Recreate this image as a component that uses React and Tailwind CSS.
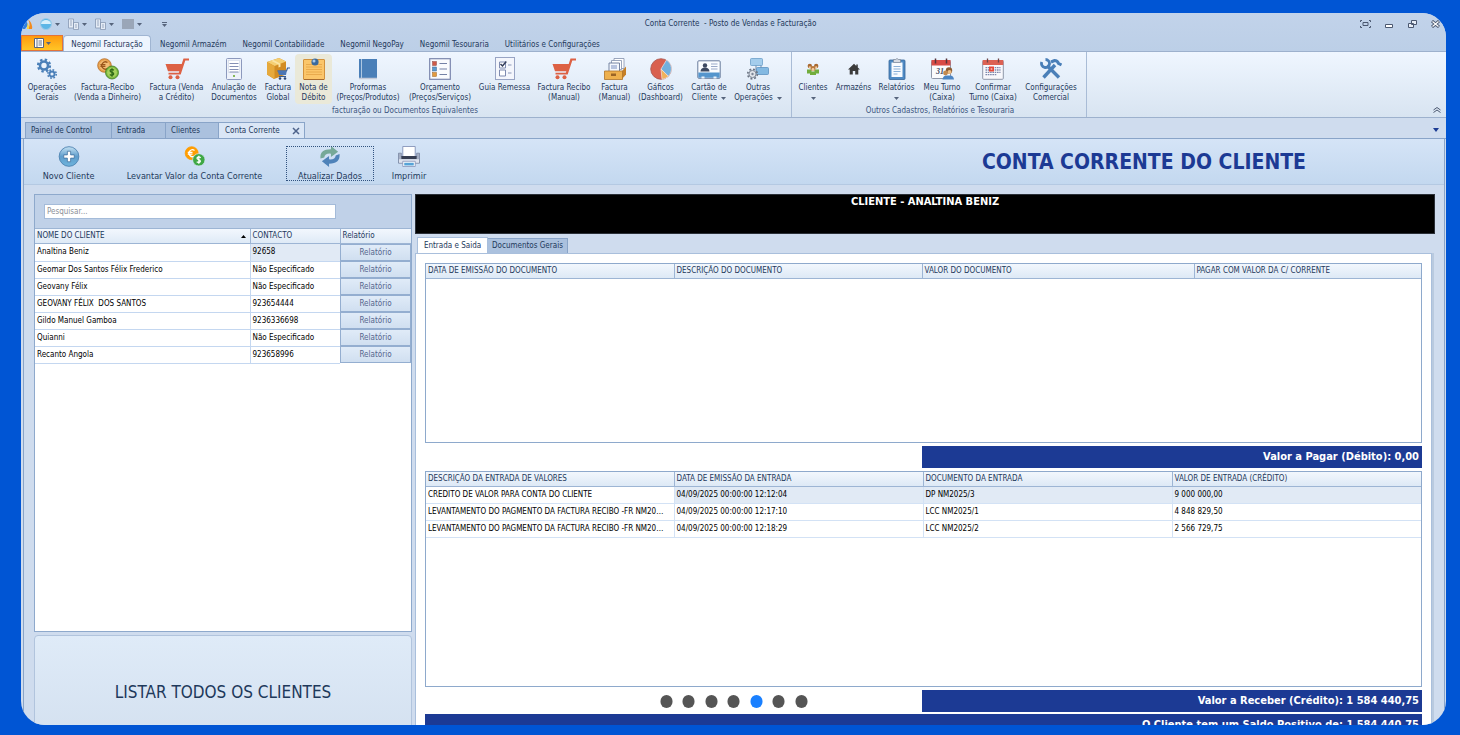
import * as React from 'react';

const OperationsIcon = () => (
	<svg viewBox="0 0 22 22" className="size-[22px]" fill="none" stroke="#4a7fb8">
		<circle cx="8" cy="7.5" r="4" strokeWidth="2.6" />
		<circle cx="8" cy="7.5" r="6" strokeWidth="2.2" strokeDasharray="2.4 2.31" />
		<circle cx="16" cy="16" r="2.5" strokeWidth="1.8" />
		<circle cx="16" cy="16" r="4.2" strokeWidth="1.6" strokeDasharray="1.7 1.6" />
	</svg>
);

const CoinsIcon = ({ flat }) => (
	<svg viewBox="0 0 22 22" className="size-[22px]">
		<circle cx="7.5" cy="7.5" r="6.8" fill={flat ? '#ff9d00' : '#e7a04c'} stroke={flat ? '#ff9d00' : '#b86c24'} strokeWidth=".8" />
		{!flat && <circle cx="7.5" cy="7.5" r="5" fill="#f3bd76" />}
		<path d="M10.5 4.6A3.6 3.6 0 1 0 10.5 10.4M3.4 6.6h5M3.4 8.4h5" fill="none" stroke={flat ? '#fff' : '#9a561a'} strokeWidth="1.3" />
		<circle cx="15" cy="14.5" r="6.5" fill={flat ? '#3fa845' : '#77b63d'} stroke={flat ? '#d3e3f6' : '#3f7a1f'} strokeWidth=".8" />
		{!flat && <circle cx="15" cy="14.5" r="4.9" fill="#a5d15c" />}
		<path d="M17 12.2q-2-1.3-3.3-.4-1.2 1.2.3 2.1l2 .9q1.3 1-.1 2.2-1.5.8-3.1-.4M15 10.3v8.4" fill="none" stroke={flat ? '#fff' : '#2f6a17'} strokeWidth="1.3" />
	</svg>
);

const CartIcon = () => (
	<svg viewBox="0 0 24 22" className="h-[22px] w-6" fill="#dd6144">
		<path d="M.5 6h16.2L18.500.6H24v1.800h-3.700l-4.600 14H3.500v-1.600h10.300l.5-1.600H3z" />
		<circle cx="5.500" cy="19.300" r="2" />
		<circle cx="12.500" cy="19.300" r="2" />
	</svg>
);

const DocumentIcon = () => (
	<svg viewBox="0 0 22 22" className="size-[22px]">
		<rect x="3.5" y=".5" width="15" height="21" rx="1" fill="#eef2fa" stroke="#8c99bd" />
		<rect x="5.5" y="2.5" width="11" height="12" fill="#fff" stroke="#cdd5e6" strokeWidth=".6" />
		<path d="M6.5 5.5h9M6.5 8.5h9M6.5 11.5h9M6.5 14h9" stroke="#8590b5" />
		<circle cx="11" cy="18" r="1.1" fill="#6caa34" />
	</svg>
);

const BoxIcon = () => (
	<svg viewBox="0 0 24 22" className="h-[22px] w-6">
		<path d="m1 4 12-4 7 3.5v13L8 21l-7-4.500z" fill="#d28c23" />
		<path d="M1 4 13 0l7 3.500L8.500 8z" fill="#f5cf73" />
		<path d="M1 4l7.500 4v13L1 16.500z" fill="#e6a93c" />
		<path d="m5 2.700 7.500 3.800v3l2-.8v-3L7.500 2z" fill="#fbe5a5" />
		<path d="M11.500 13h9l1-3H24" fill="none" stroke="#365a91" strokeWidth="1.200" />
		<path d="M11.500 12.500h9.300L20 17h-7z" fill="#4c76b4" />
		<path d="M13 18.500h7" stroke="#365a91" />
		<circle cx="14" cy="20.500" r="1.300" fill="#2c4675" />
		<circle cx="19" cy="20.500" r="1.300" fill="#2c4675" />
	</svg>
);

const NoteIcon = () => (
	<svg viewBox="0 0 22 22" className="size-[22px]">
		<rect x=".5" y="1.500" width="21" height="20" rx=".5" fill="#fbc66a" stroke="#d3923c" />
		<path d="M3 6.500h16M3 9h16M3 11.500h16M3 14h16M3 16.500h16" stroke="#e4a345" strokeWidth=".8" />
		<path d="M1 21.500h20" stroke="#a76b2e" />
		<circle cx="12" cy="4" r="3.600" fill="#3b6a9d" />
		<circle cx="11" cy="3" r="1.500" fill="#a5c8ea" />
	</svg>
);

const BookIcon = () => (
	<svg viewBox="0 0 22 22" className="size-[22px]">
		<path d="M2 1h18v19H2z" fill="#4a7fb8" />
		<path d="M4.500 1v19" stroke="#c9daec" strokeWidth=".8" />
		<path d="M2 20.500h18" stroke="#c3c9d8" strokeWidth="1.500" />
	</svg>
);

const OrderListIcon = () => (
	<svg viewBox="0 0 22 22" className="size-[22px]">
		<rect x=".7" y=".7" width="20.600" height="20.600" fill="#fafbfe" stroke="#7a86ad" strokeWidth="1.200" />
		<rect x="3.500" y="3.500" width="4" height="4" fill="#cf5a48" stroke="#8f4b45" strokeWidth=".5" />
		<rect x="3.500" y="9" width="4" height="4" fill="#5a9bd0" stroke="#41648c" strokeWidth=".5" />
		<rect x="3.500" y="14.500" width="4" height="4" fill="#e39a3d" stroke="#9c6429" strokeWidth=".5" />
		<path d="M10.500 5.500h7.500M10.500 11h7.500M10.500 16.500h7.500" stroke="#7481a6" />
	</svg>
);

const ChecklistIcon = () => (
	<svg viewBox="0 0 22 24" className="h-6 w-[22px]" fill="none">
		<rect x="1.500" y=".5" width="19" height="22" fill="#f4f6fc" stroke="#98a4c4" />
		<path d="M5.500 5h6v6h-6zM5.500 13h6v6h-6z" fill="#fff" stroke="#7e8bb0" />
		<path d="m6.500 7 2 2 3.800-4.500" stroke="#333c59" strokeWidth="1.500" />
		<path d="M14 8h3.500M14 16h3.500" stroke="#8b97b8" />
	</svg>
);

const TrayIcon = () => (
	<svg viewBox="0 0 22 22" className="size-[22px]">
		<path d="M10 .5h10v10H10z" fill="#fff" stroke="#8390ac" strokeWidth=".8" />
		<path d="M7.500 2.500h10v9h-10z" fill="#fff" stroke="#8390ac" strokeWidth=".8" />
		<path d="M5 5h10.500v9H5z" fill="#f5f8fd" stroke="#6a7898" strokeWidth=".9" />
		<path d="M7 8h6M7 10h6" stroke="#7a8fc0" />
		<path d="m18 13 4-4.500v8L18 21z" fill="#c57f26" />
		<path d="M.5 13h18v8.500H.5z" fill="#eeb04d" stroke="#ae7429" strokeWidth=".8" />
		<path d="M7 15.500h5V18H7z" fill="#9a6426" />
	</svg>
);

const PieIcon = () => (
	<svg viewBox="0 0 22 22" className="size-[22px]">
		<circle cx="11" cy="11" r="10.300" fill="#d9604f" stroke="#a9564f" strokeWidth=".8" />
		<path d="M11 11 16.500 2a10.300 10.300 0 0 1 1.800 16.200z" fill="#72b0dd" stroke="#f2e4e2" strokeWidth=".7" />
		<path d="m11 11 7.300 7.200A10.300 10.300 0 0 1 12 21.300z" fill="#efb25c" stroke="#f2e4e2" strokeWidth=".7" />
	</svg>
);

const CardIcon = () => (
	<svg viewBox="0 0 24 22" className="h-[22px] w-6">
		<rect x=".8" y="2.800" width="22.400" height="17.500" rx="1" fill="#fafcff" stroke="#687b9c" />
		<path d="M1.300 14.500h21.400v5.300H1.300z" fill="#5495cd" />
		<path d="M4.500 20.500h3v-2h-3zM16.500 20.500h3v-2h-3z" fill="#eaf2fa" />
		<circle cx="8" cy="7.500" r="2.200" fill="#3d4961" />
		<path d="M3.500 13.500q.3-3.300 3-3.800h3q2.700.5 3 3.800z" fill="#3d4961" />
		<path d="M14 6h6.500M14 8.500h6.500M14 11h6.500" stroke="#9aa9c8" />
	</svg>
);

const OtherIcon = () => (
	<svg viewBox="0 0 22 22" className="size-[22px]">
		<path d="M9 7v6M14 7v3" stroke="#7389a4" />
		<rect x="3.500" y=".5" width="12" height="7" rx="1" fill="#a4cdec" stroke="#6c9fc9" strokeWidth=".8" />
		<rect x="9.500" y="9.500" width="12" height="7" rx="1" fill="#83b9e2" stroke="#5d92c0" strokeWidth=".8" />
		<circle cx="5.500" cy="16" r="4.800" fill="none" stroke="#6b7482" strokeWidth="1.700" strokeDasharray="1.900 1.870" />
		<circle cx="5.500" cy="16" r="3.600" fill="#dfe3e9" stroke="#7a8494" />
		<circle cx="5.500" cy="16" r="1.200" fill="#7a8494" />
	</svg>
);

const PeopleIcon = () => (
	<svg viewBox="0 0 12 12" className="size-3">
		<path d="M0 6.500h4.500v4H0zM7.500 6.500H12v4H7.500zM3 8.500h6V12H3z" fill="#72ad3c" />
		<circle cx="2.800" cy="3" r="2.200" fill="#a96a32" />
		<circle cx="9.200" cy="3" r="2.200" fill="#a96a32" />
		<circle cx="6" cy="5.500" r="2.500" fill="#b9793d" />
		<circle cx="6" cy="6.500" r="1.400" fill="#f2cda0" />
		<circle cx="2.800" cy="4.300" r="1.100" fill="#f2cda0" />
		<circle cx="9.200" cy="4.300" r="1.100" fill="#f2cda0" />
	</svg>
);

const HouseIcon = () => (
	<svg viewBox="0 0 12 12" className="size-3" fill="#3b3b3b">
		<path d="M6 .8 0 6.500h1.700V11.500h3.100V8h2.400v3.500h3.100V6.500H12L9.800 4.400V1.500H8.300V3z" />
	</svg>
);

const ClipboardIcon = () => (
	<svg viewBox="0 0 22 22" className="size-[22px]">
		<rect x="3" y="2" width="16" height="19.500" rx="1" fill="#4f8ac4" stroke="#366699" strokeWidth=".8" />
		<path d="M5.500 4.500h11v14.500h-11z" fill="#f8fbff" />
		<path d="M7.500 1.500h2q1.500-2 3 0h2v3h-7z" fill="#d5dae3" stroke="#7d8797" strokeWidth=".7" />
		<path d="M7.500 8.500h7M7.500 11h7M7.500 13.500h7M7.500 16h4" stroke="#8ab0d8" />
	</svg>
);

const CalendarUserIcon = () => (
	<svg viewBox="0 0 24 22" className="h-[22px] w-6">
		<rect x="1.500" y="2.500" width="19" height="18" rx="1" fill="#fbfbfd" stroke="#8e96a8" />
		<path d="M1.500 2h19v5.500h-19z" fill="#d94b46" />
		<path d="M5.500.5v5M16.500.5v5" stroke="#56333a" strokeWidth="1.500" />
		<text x="6" y="16" fontSize="8" fontStyle="italic" fontWeight="700" fontFamily="Liberation Serif, serif" fill="#414960">31</text>
		<circle cx="19" cy="12.500" r="3.200" fill="#8d5c32" />
		<circle cx="19.500" cy="14" r="2" fill="#edbd85" />
		<circle cx="15.500" cy="15" r="2.400" fill="#c48a50" />
		<path d="M12.500 21.500q.5-4 4-4h3.500q3.500 0 4 4z" fill="#4a84c4" />
	</svg>
);

const CalendarIcon = () => (
	<svg viewBox="0 0 22 22" className="size-[22px]">
		<rect x=".7" y="2.500" width="20.600" height="18.800" rx="1" fill="#f8f8fc" stroke="#8e96a8" />
		<path d="M.7 2h20.600v5H.7z" fill="#dc6153" />
		<path d="M5.500.5v4M16.500.5v4" stroke="#6e4548" strokeWidth="1.300" />
		<path d="M3.500 9.700h15M3.500 12h15M3.500 14.300h15M3.500 16.600h11" stroke="#7d87ab" strokeWidth="1.300" strokeDasharray="1.600 .7" />
		<rect x="7" y="8.500" width="5" height="5" fill="#e6483a" />
		<path d="M8.700 11h1.600" stroke="#fff" />
	</svg>
);

const ToolsIcon = () => (
	<svg viewBox="0 0 22 22" className="size-[22px]" fill="none" stroke="#4a7fb8">
		<path d="M3.500 19.500 15 7" strokeWidth="3.400" />
		<path d="m7 7.500 12 12" strokeWidth="3.400" />
		<path d="M1.800 4a4 4 0 1 0 3.700-2.500" strokeWidth="2.800" />
		<path d="m11 4 3.500-1.500q3 0 4 3l3 1.500" strokeWidth="3" />
	</svg>
);

const AddIcon = () => (
	<svg viewBox="0 0 22 22" className="size-[22px]">
		<defs>
			<linearGradient id="add" x1="0" y1="0" x2="0" y2="1">
				<stop offset="0" stopColor="#c5e2f3" />
				<stop offset=".5" stopColor="#5f9dcc" />
				<stop offset="1" stopColor="#6fb4dc" />
			</linearGradient>
		</defs>
		<circle cx="11" cy="11" r="10.300" fill="url(#add)" stroke="#4a80ae" strokeWidth=".9" />
		<path d="M9.300 5.500h3.400v3.800h3.800v3.400h-3.800v3.800H9.300v-3.800H5.500V9.300h3.800z" fill="#fff" stroke="#3f6f9c" strokeWidth=".8" />
	</svg>
);

const RefreshIcon = () => (
	<svg viewBox="0 0 22 22" className="size-[22px]">
		<path d="M1 13Q0 3.500 12 3.500V0l7.500 6L12 11.500V8Q5.500 7.500 5 12z" fill="#76a998" />
		<path d="M21 8.500q1 10-11 10V22l-7.500-6L10 10.500V14q6.500.5 7-4z" fill="#4f83b9" />
	</svg>
);

const PrinterIcon = () => (
	<svg viewBox="0 0 24 22" className="h-[22px] w-6">
		<path d="M5.500.5h13v11h-13z" fill="#fff" stroke="#7e8db4" strokeWidth=".9" />
		<path d="M1 7.500h3v4h16v-4h3V18H1z" fill="#a5afc4" stroke="#6e7b97" strokeWidth=".7" />
		<path d="M4 10.500h16v3H4z" fill="#363e52" />
		<path d="M1.500 14h21v3.500h-21z" fill="#dfe4ef" />
		<path d="M5.500 16h13v5.500h-13z" fill="#fff" stroke="#7e8db4" strokeWidth=".8" />
		<path d="M7 17.500h10v3H7z" fill="#56a3d7" />
	</svg>
);

const Caret = () => (
	<svg viewBox="0 0 5 3" className="inline-block h-[3px] w-[5px]" fill="#56647c">
		<path d="M0 0h5L2.500 3z" />
	</svg>
);

const DOCUMENTS = [
	{ lines: ['Operações', 'Gerais'], icon: OperationsIcon, width: 'w-[44px]' },
	{ lines: ['Factura-Recibo', '(Venda a Dinheiro)'], icon: CoinsIcon, width: 'w-[77px]' },
	{ lines: ['Factura (Venda', 'a Crédito)'], icon: CartIcon, width: 'w-[61px]' },
	{ lines: ['Anulação de', 'Documentos'], icon: DocumentIcon, width: 'w-[54px]' },
	{ lines: ['Factura', 'Global'], icon: BoxIcon, width: 'w-[34px]' },
	{ lines: ['Nota de', 'Débito'], icon: NoteIcon, width: 'w-[37px]', active: true },
	{ lines: ['Proformas', '(Preços/Produtos)'], icon: BookIcon, width: 'w-[72px]' },
	{ lines: ['Orçamento', '(Preços/Serviços)'], icon: OrderListIcon, width: 'w-[72px]' },
	{ lines: ['Guia Remessa', ''], icon: ChecklistIcon, width: 'w-[57px]' },
	{ lines: ['Factura Recibo', '(Manual)'], icon: CartIcon, width: 'w-[62px]' },
	{ lines: ['Factura', '(Manual)'], icon: TrayIcon, width: 'w-[39px]' },
	{ lines: ['Gáficos', '(Dashboard)'], icon: PieIcon, width: 'w-[53px]' },
	{ lines: ['Cartão de', 'Cliente'], icon: CardIcon, width: 'w-[44px]', caret: true },
	{ lines: ['Outras', 'Operações'], icon: OtherIcon, width: 'w-[54px]', caret: true },
];

const OTHERS = [
	{ lines: ['Clientes', ''], icon: PeopleIcon, width: 'w-[34px]', caret: true },
	{ lines: ['Armazéns', ''], icon: HouseIcon, width: 'w-[47px]' },
	{ lines: ['Relatórios', ''], icon: ClipboardIcon, width: 'w-[39px]', caret: true },
	{ lines: ['Meu Turno', '(Caixa)'], icon: CalendarUserIcon, width: 'w-[52px]' },
	{ lines: ['Confirmar', 'Turno (Caixa)'], icon: CalendarIcon, width: 'w-[50px]' },
	{ lines: ['Configurações', 'Comercial'], icon: ToolsIcon, width: 'w-[66px]' },
];

const MODULES = ['Negomil Armazém', 'Negomil Contabilidade', 'Negomil NegoPay', 'Negomil Tesouraria', 'Utilitários e Configurações'];

const CLIENTS = [
	['Analtina Beniz', '92658'],
	['Geomar Dos Santos Félix Frederico', 'Não Especificado'],
	['Geovany Félix', 'Não Especificado'],
	['GEOVANY FÉLIX  DOS SANTOS', '923654444'],
	['Gildo Manuel Gamboa', '9236336698'],
	['Quianni', 'Não Especificado'],
	['Recanto Angola', '923658996'],
];

const ENTRIES = [
	['CREDITO DE VALOR PARA CONTA DO CLIENTE', '04/09/2025 00:00:00 12:12:04', 'DP NM2025/3', '9 000 000,00'],
	['LEVANTAMENTO DO PAGMENTO DA FACTURA RECIBO -FR NM2025/1', '04/09/2025 00:00:00 12:17:10', 'LCC NM2025/1', '4 848 829,50'],
	['LEVANTAMENTO DO PAGMENTO DA FACTURA RECIBO -FR NM2025/2', '04/09/2025 00:00:00 12:18:29', 'LCC NM2025/2', '2 566 729,75'],
];

const RibbonButton = ({ lines, icon: Icon, width, active, caret }) => (
	<button
		type="button"
		className={`${width} flex h-[50px] flex-col items-center justify-start whitespace-nowrap leading-[10px] ${active ? 'rounded-sm bg-[#eae9d9]' : ''}`}
	>
		<span className="flex h-[29px] shrink-0 items-center justify-center"><Icon /></span>
		<span className="h-[10px] shrink-0">{lines[0]}</span>
		<span className="flex h-[10px] shrink-0 items-center gap-1">{lines[1]}{caret && <Caret />}</span>
	</button>
);

const RibbonGroup = ({ title, items, className }) => (
	<div className={`flex shrink-0 flex-col items-center border-r border-[#a9bcd6] pl-1 pt-0.5 ${className}`}>
		<div className="flex">
			{items.map(item => <RibbonButton key={item.lines.join(' ')} {...item} />)}
		</div>
		<div className="mt-0.5 leading-[10px] text-[#3b5580]">{title}</div>
	</div>
);

const TitleBar = () => (
	<div className="flex h-[22px] items-center justify-between">
		<div className="flex flex-1 items-center gap-2">
			<svg viewBox="0 0 12 12" className="-mr-px size-3">
				<path d="M0 11 5 2l2 5-3 4z" fill="#2f7fe0" />
				<path d="M7 1q5 5 4 10H7q3-4 0-10z" fill="#f28a1d" />
				<path d="M6.500 5q2 3 1.500 6H6z" fill="#ffd633" />
			</svg>
			<button type="button" aria-label="Vista" className="flex items-center gap-[3px]">
				<svg viewBox="0 0 12 12" className="size-3">
					<circle cx="6" cy="6" r="5.500" fill="#5cb6e6" stroke="#9ccbe8" />
					<path d="M1 6a5 4 0 0 1 10 0z" fill="#d6effb" />
				</svg>
				<Caret />
			</button>
			{['Documento', 'Relatório'].map(name => (
				<button key={name} type="button" aria-label={name} className="flex items-center gap-[3px]">
					<svg viewBox="0 0 11 12" className="h-3 w-[11px]" fill="#e4ebf5" stroke="#8798b3" strokeWidth=".8">
						<path d="M.5 1h5v9h-5zM2 3h2M2 5h2M2 7h2M5.500 4.500h5v7h-5zM7 7h2M7 9h2" />
					</svg>
					<Caret />
				</button>
			))}
			<button type="button" aria-label="Cor" className="flex items-center gap-[3px]">
				<span className="h-2.5 w-3 bg-[#9aa6b8]" />
				<Caret />
			</button>
			<button type="button" aria-label="Personalizar" className="ml-3 flex flex-col items-center gap-px">
				<span className="h-px w-[5px] bg-[#56647c]" />
				<Caret />
			</button>
		</div>
		<h1 className="whitespace-pre">Conta Corrente  - Posto de Vendas e Facturação</h1>
		<div className="flex flex-1 items-center justify-end gap-3.5 pr-1.5">
			<button type="button" aria-label="Ecrã inteiro">
				<svg viewBox="0 0 11 8" className="h-2 w-[11px]" fill="none" stroke="#4b5870">
					<path d="M.5 2V.5H2M9 .5h1.500V2M.5 6v1.500H2M9 7.500h1.500V6M3 2.500h5v3H3z" />
				</svg>
			</button>
			<button type="button" aria-label="Minimizar">
				<svg viewBox="0 0 9 8" className="h-2 w-[9px]"><path d="M.5 4.500h7v3h-7z" fill="#fff" stroke="#4b5870" /></svg>
			</button>
			<button type="button" aria-label="Restaurar">
				<svg viewBox="0 0 9 8" className="h-2 w-[9px]" fill="#e8eef7" stroke="#4b5870">
					<path d="M3.500.5h5v4h-5zM.5 3.500h5v4h-5z" />
				</svg>
			</button>
			<button type="button" aria-label="Fechar">
				<svg viewBox="0 0 9 8" className="h-2 w-[9px]">
					<path d="m1 1 7 6M8 1 1 7" stroke="#4b5870" strokeWidth="3" />
					<path d="m1.500 1.500 6 5m0-5-6 5" stroke="#fff" strokeWidth="1.200" />
				</svg>
			</button>
		</div>
	</div>
);

const ModuleTabs = () => (
	<div className="flex h-4 items-stretch">
		<button type="button" aria-label="Menu" className="flex w-[42px] items-center justify-center gap-0.5 border border-[#e2733a] bg-linear-to-b from-[#ff9a0c] to-[#ffc526]">
			<svg viewBox="0 0 10 10" className="size-2.5">
				<path d="M.5.5h9v9h-9z" fill="#fff" stroke="#56647c" />
				<path d="M3 1v8M4.500 3H8M4.500 5H8M4.500 7H8" stroke="#56647c" strokeWidth=".9" />
			</svg>
			<Caret />
		</button>
		<button type="button" className="w-[88px] rounded-t-sm border border-b-0 border-[#a0b5d2] bg-[#eef5fe] pt-0.5">Negomil Facturação</button>
		<div className="ml-[9px] flex gap-4">
			{MODULES.map(name => <button key={name} type="button" className="whitespace-nowrap pt-[3px]">{name}</button>)}
		</div>
	</div>
);

const DocumentTabs = () => (
	<div className="flex h-[21px] items-end border-b border-[#89a4c8] bg-[#cfdcee] pl-1 pt-1">
		<button type="button" className="h-4 w-[87px] border border-b-0 border-[#89a4c8] bg-[#abc1de] pl-[5px] text-left">Painel de Control</button>
		<button type="button" className="h-4 w-[54px] border border-b-0 border-l-0 border-[#89a4c8] bg-[#abc1de] pl-[5px] text-left">Entrada</button>
		<button type="button" className="h-4 w-[53px] border border-b-0 border-l-0 border-[#89a4c8] bg-[#abc1de] pl-[5px] text-left">Clientes</button>
		<button type="button" className="flex h-4 w-[86px] items-center justify-between border border-b-0 border-l-0 border-[#89a4c8] bg-[#dae6f6] pl-1.5 pr-1">
			Conta Corrente
			<svg viewBox="0 0 8 8" className="size-2" stroke="#4e638b" strokeWidth="1.500"><path d="m1 1 6 6M7 1 1 7" /></svg>
		</button>
		<button type="button" aria-label="Lista de separadores" className="ml-auto mr-[7px] self-center">
			<svg viewBox="0 0 6 4" className="h-1 w-1.5" fill="#1c3c94"><path d="M0 0h6L3 4z" /></svg>
		</button>
	</div>
);

const Toolbar = () => (
	<div className="flex h-[46px] shrink-0 items-start gap-3 border-b border-[#b4c9e2] bg-linear-to-b from-[#d5e4f7] to-[#c3d8ef] pl-2.5 pt-[7px] text-[9px] leading-[10px]">
		<button type="button" className="flex h-[35px] w-[69px] flex-col items-center justify-start gap-1 whitespace-nowrap"><AddIcon />Novo Cliente</button>
		<button type="button" className="flex h-[35px] w-[159px] flex-col items-center justify-start gap-1 whitespace-nowrap"><CoinsIcon flat />Levantar Valor da Conta Corrente</button>
		<button type="button" className="flex h-[35px] w-[88px] flex-col items-center justify-start gap-1 whitespace-nowrap outline-1 -outline-offset-1 outline-dotted outline-[#31527f]"><RefreshIcon />Atualizar Dados</button>
		<button type="button" className="flex h-[35px] w-[46px] flex-col items-center justify-start gap-1 whitespace-nowrap"><PrinterIcon />Imprimir</button>
		<h2 className="ml-auto mr-[138px] whitespace-nowrap text-[21px] font-bold leading-8 text-[#1c3a94]">CONTA CORRENTE DO CLIENTE</h2>
	</div>
);

const ClientsPanel = () => (
	<section className="flex w-[378px] shrink-0 flex-col">
		<div className="flex min-h-0 flex-1 flex-col border border-[#8ea9cc] bg-white">
			<div className="h-[33px] bg-[#c0d1e8] pl-[9px] pt-[9px]">
				<input
					type="text"
					aria-label="Pesquisar"
					placeholder="Pesquisar..."
					className="block h-[15px] w-[292px] border border-[#a4bbd9] bg-white px-0.5 placeholder:text-[#8b8f98]"
				/>
			</div>
			<table className="w-full table-fixed border-collapse text-left text-black">
				<colgroup>
					<col />
					<col className="w-[90px]" />
					<col className="w-[71px]" />
				</colgroup>
				<thead>
					<tr className="h-[15px] bg-linear-to-b from-[#f2f7fd] to-[#dde9f6] text-[#1e395b]">
						<th className="border-y border-[#9db5d4] px-0.5 font-normal">
							<span className="flex items-center justify-between pr-0.5">
								NOME DO CLIENTE
								<svg viewBox="0 0 5 3" className="h-[3px] w-[5px]"><path d="M0 3h5L2.500 0z" /></svg>
							</span>
						</th>
						<th className="border border-[#9db5d4] px-0.5 font-normal">CONTACTO</th>
						<th className="border-y border-[#9db5d4] px-0.5 font-normal">Relatório</th>
					</tr>
				</thead>
				<tbody>
					{CLIENTS.map(([name, contact], index) => (
						<tr key={name} className="h-[17px]">
							<td className="whitespace-pre border-b border-[#c4d7f0] px-0.5">{name}</td>
							<td className={`border-b border-l border-[#c4d7f0] px-0.5 ${index === 0 ? 'bg-[#e1eaf5]' : ''}`}>{contact}</td>
							<td className="p-0">
								<button type="button" className="block h-[17px] w-full border border-[#94aed0] bg-linear-to-b from-[#e0ebf8] to-[#d0dff0] text-[#54658c]">Relatório</button>
							</td>
						</tr>
					))}
				</tbody>
			</table>
		</div>
		<button type="button" className="mt-[3px] h-[101px] shrink-0 rounded-t-sm border border-[#b1c4dd] bg-linear-to-b from-[#dfebf8] to-[#d4e1f0] pt-3 text-[17px]">
			LISTAR TODOS OS CLIENTES
		</button>
	</section>
);

const Grid = ({ columns, widths, rows }) => (
	<table className="w-full table-fixed border-collapse text-left text-black">
		<colgroup>
			{widths.map((width, index) => <col key={index} className={width} />)}
		</colgroup>
		<thead>
			<tr className="h-[14px] bg-linear-to-b from-[#f2f7fd] to-[#dde9f6] text-[#1e395b]">
				{columns.map(column => (
					<th key={column} className="border-b border-l border-[#9db5d4] px-0.5 font-normal first:border-l-0">{column}</th>
				))}
			</tr>
		</thead>
		<tbody>
			{rows.map((row, index) => (
				<tr key={row[2]} className="h-[17px]">
					{row.map((cell, i) => (
						<td key={cell} className={`truncate border-b border-l border-[#d3e2f5] pl-0.5 pr-1.5 first:border-l-0 ${index === 0 && i > 0 ? 'bg-[#e1eaf5]' : ''}`}>{cell}</td>
					))}
				</tr>
			))}
		</tbody>
	</table>
);

const AccountPanel = () => (
	<section className="flex min-w-0 flex-1 flex-col">
		<h3 className="h-10 shrink-0 border border-[#2b3038] bg-black text-center text-[11px] font-bold leading-[14px] text-white">CLIENTE - ANALTINA BENIZ</h3>
		<div className="mt-[3px] flex h-4 shrink-0 items-end pl-0.5">
			<button type="button" className="h-full w-[71px] border border-b-0 border-[#a9bfdc] bg-white">Entrada e Saida</button>
			<button type="button" className="h-[15px] w-20 border border-b-0 border-l-0 border-[#89a4c8] bg-[#abc1de]">Documentos Gerais</button>
		</div>
		<div className="mr-[3px] flex min-h-0 flex-1 flex-col border border-b-0 border-[#a9bfdc] bg-white px-[9px] pt-[9px] shadow-[2px_0_0_#b9cadf]">
			<div className="h-[180px] shrink-0 border border-[#8ea9cc]">
				<Grid
					columns={['DATA DE EMISSÃO DO DOCUMENTO', 'DESCRIÇÃO DO DOCUMENTO', 'VALOR DO DOCUMENTO', 'PAGAR COM VALOR DA C/ CORRENTE']}
					widths={['w-[248px]', 'w-[248px]', 'w-[272px]', '']}
					rows={[]}
				/>
			</div>
			<p className="ml-auto mt-[3px] h-[22px] w-[500px] shrink-0 bg-[#1c3a94] pr-[3px] text-right text-[11px] font-bold leading-[22px] text-white">Valor a Pagar (Débito): 0,00</p>
			<div className="mt-[3px] min-h-0 flex-1 border border-[#8ea9cc]">
				<Grid
					columns={['DESCRIÇÃO DA ENTRADA DE VALORES', 'DATA DE EMISSÃO DA ENTRADA', 'DOCUMENTO DA ENTRADA', 'VALOR DE ENTRADA (CRÉDITO)']}
					widths={['w-[248px]', 'w-[249px]', 'w-[249px]', '']}
					rows={ENTRIES}
				/>
			</div>
			<p className="ml-auto mt-[3px] h-[22px] w-[500px] shrink-0 bg-[#1c3a94] pr-[3px] text-right text-[11px] font-bold leading-[22px] text-white">Valor a Receber (Crédito): 1 584 440,75</p>
			<p className="mt-0.5 h-[22px] shrink-0 bg-[#1c3a94] pr-[3px] text-right text-[11px] font-bold leading-[22px] text-white">O Cliente tem um Saldo Positivo de: 1 584 440,75</p>
		</div>
	</section>
);

export default function App() {
	const [slide, setSlide] = React.useState(4);

	return (
		<div className="h-screen bg-[#0055d4] pb-2.5 pl-[21px] pr-3.5 pt-[13px] font-['DejaVu_Sans_Condensed','Noto_Sans',sans-serif] text-[8px] leading-[10px] text-[#1e395b]">
			<div className="relative flex h-full flex-col overflow-hidden rounded-3xl bg-[#cfdcee]">
				<header className="shrink-0">
					<div className="bg-linear-to-b from-[#c2d3ea] to-[#bccfe7]">
						<TitleBar />
						<ModuleTabs />
					</div>
					<div className="flex h-[67px] border-b border-t border-[#9db1cd] bg-linear-to-b from-[#eff6ff] to-[#d8e4f1]">
						<RibbonGroup title="facturação ou Documentos Equivalentes" items={DOCUMENTS} className="pr-1.5" />
						<RibbonGroup title="Outros Cadastros, Relatórios e Tesouraria" items={OTHERS} className="pr-0.5" />
						<button type="button" aria-label="Recolher" className="ml-auto mr-[5px] self-end pb-1">
							<svg viewBox="0 0 8 6" className="h-1.5 w-2" fill="none" stroke="#4b5870"><path d="m.5 3 3.500-2.500L7.500 3M.5 5.500 4 3l3.500 2.500" /></svg>
						</button>
					</div>
					<DocumentTabs />
				</header>
				<main className="ml-0.5 mr-px -mb-[11px] flex min-h-0 flex-1 flex-col border-x border-[#89a4c8]">
					<Toolbar />
					<div className="flex min-h-0 flex-1 gap-[3px] pl-2.5 pr-[9px] pt-[9px]">
						<ClientsPanel />
						<AccountPanel />
					</div>
				</main>
				<nav aria-label="Imagens" className="absolute bottom-[17px] left-1/2 flex w-[147px] -translate-x-1/2 justify-between">
					{[0, 1, 2, 3, 4, 5, 6].map(index => (
						<button
							key={index}
							type="button"
							aria-label={`Imagem ${index + 1}`}
							onClick={() => setSlide(index)}
							className={`h-[13px] w-3 rounded-full ${slide === index ? 'bg-[#1a80ff]' : 'bg-[#555555]'}`}
						/>
					))}
				</nav>
			</div>
		</div>
	);
}
